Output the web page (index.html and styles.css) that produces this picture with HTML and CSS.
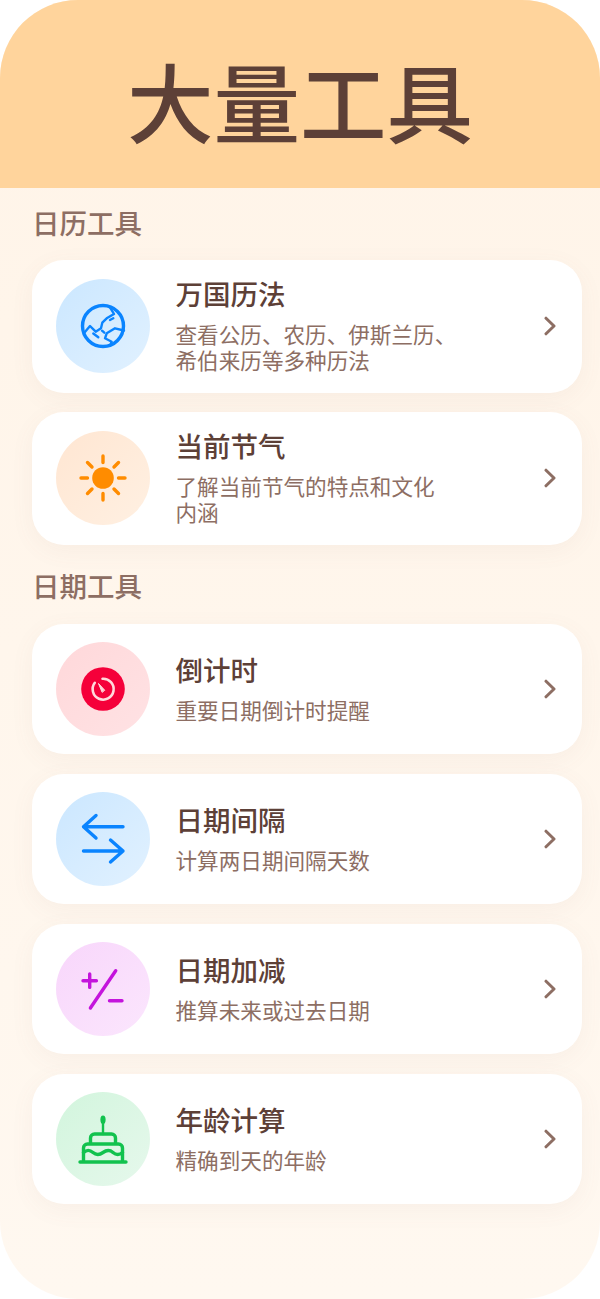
FILE: index.html
```html
<!DOCTYPE html>
<html lang="zh-CN">
<head>
  <meta charset="UTF-8">
  <meta name="viewport" content="width=device-width, initial-scale=1.0">
  <title>大量工具</title>
  <link rel="stylesheet" href="styles.css">
</head>
<body>
  <div class="screen">
    <header class="top-bar">
      <h1>大量工具</h1>
    </header>

    <section class="tool-group">
      <h2>日历工具</h2>
      <div class="tool-list">
        <div class="tool-card">
          <div class="tool-icon icon-blue">
            <svg viewBox="0 0 56 56">
              <circle cx="28" cy="28" r="20.5"/>
              <path class="thin" d="M35 9.3 39 16 31.700 20.300 27.300 24.700 26 30.300 20.700 33.700 15 28 9.300 34.700"/>
              <path class="thin" d="M49 32.500 40 30.300 31.700 35.300 30 40.300 36.700 43.700 35 47.500"/>
              <path class="thin" d="M18.300 35.500 23.300 39.300M27 32.700 29.300 34.700M35 22 38.300 20.300"/>
            </svg>
          </div>
          <div class="tool-text">
            <h3>万国历法</h3>
            <p>查看公历、农历、伊斯兰历、<br>希伯来历等多种历法</p>
          </div>
          <svg class="chevron" viewBox="0 0 14 22"><path d="M2 3.200 10 11 2 18.800"/></svg>
        </div>
        <div class="tool-card">
          <div class="tool-icon icon-orange">
            <svg viewBox="0 0 56 56">
              <circle class="solid" cx="28" cy="28" r="10.8"/>
              <path d="M28 6V12.500M28 43.500V50M6 28H12.500M43.500 28H50M12.500 12.500 17 17M39 39 43.500 43.500M43.500 12.500 39 17M17 39 12.500 43.500"/>
            </svg>
          </div>
          <div class="tool-text">
            <h3>当前节气</h3>
            <p>了解当前节气的特点和文化<br>内涵</p>
          </div>
          <svg class="chevron" viewBox="0 0 14 22"><path d="M2 3.200 10 11 2 18.800"/></svg>
        </div>
      </div>
    </section>

    <section class="tool-group">
      <h2>日期工具</h2>
      <div class="tool-list">
        <div class="tool-card">
          <div class="tool-icon icon-red">
            <svg viewBox="0 0 56 56">
              <circle class="solid" cx="28" cy="28" r="21.800"/>
              <path class="pale" d="M27.500 17.700A10.500 10.500 0 1 1 19.800 21.800"/>
              <path class="needle" d="M29.500 29 23.500 22.500 27 31Z"/>
            </svg>
          </div>
          <div class="tool-text">
            <h3>倒计时</h3>
            <p>重要日期倒计时提醒</p>
          </div>
          <svg class="chevron" viewBox="0 0 14 22"><path d="M2 3.200 10 11 2 18.800"/></svg>
        </div>
        <div class="tool-card">
          <div class="tool-icon icon-blue">
            <svg viewBox="0 0 56 56">
              <path d="M8.500 15.700H48M21 4.500 8.500 15.700 21 27M8.500 40H48M35.500 29 48 40 35.500 51"/>
            </svg>
          </div>
          <div class="tool-text">
            <h3>日期间隔</h3>
            <p>计算两日期间隔天数</p>
          </div>
          <svg class="chevron" viewBox="0 0 14 22"><path d="M2 3.200 10 11 2 18.800"/></svg>
        </div>
        <div class="tool-card">
          <div class="tool-icon icon-purple">
            <svg viewBox="0 0 56 56">
              <path d="M40.700 9.700 15.400 47M14.700 13V26.400M8 19.700H21.400M34.500 39.700H47"/>
            </svg>
          </div>
          <div class="tool-text">
            <h3>日期加减</h3>
            <p>推算未来或过去日期</p>
          </div>
          <svg class="chevron" viewBox="0 0 14 22"><path d="M2 3.200 10 11 2 18.800"/></svg>
        </div>
        <div class="tool-card">
          <div class="tool-icon icon-green">
            <svg viewBox="0 0 56 56">
              <ellipse class="solid" cx="28" cy="8.700" rx="2.600" ry="4.200"/>
              <path class="thin" d="M28 11V23"/>
              <path d="M5 51H51M8.500 51V37A4 4 0 0 1 12.500 33H43.500A4 4 0 0 1 47.500 37V51M15.500 33V27A4 4 0 0 1 19.500 23H36.500A4 4 0 0 1 40.500 27V33"/>
              <path d="M8.500 41.500C12 38.500 14.500 38.500 18 41.500S24.500 44 28 41.500 34.500 38.500 38 41.500 44.500 44 47.500 41.500"/>
            </svg>
          </div>
          <div class="tool-text">
            <h3>年龄计算</h3>
            <p>精确到天的年龄</p>
          </div>
          <svg class="chevron" viewBox="0 0 14 22"><path d="M2 3.200 10 11 2 18.800"/></svg>
        </div>
      </div>
    </section>
  </div>
</body>
</html>
```

FILE: styles.css
```css
* {
  box-sizing: border-box;
}

body {
  margin: 0;
  background-color: #fff;
  font-family: "Liberation Sans", "Noto Sans CJK SC", sans-serif;
}

.screen {
  height: 1299px;
  overflow: hidden;
  border-radius: 78px;
  background: linear-gradient(180deg, #fff4e8 0%, #fff8f0 100%);
}

.top-bar {
  display: flex;
  align-items: center;
  justify-content: center;
  height: 188px;
  padding-top: 26px;
  background-color: #ffd49c;
}

.top-bar h1 {
  margin: 0;
  font-size: 86.5px;
  font-weight: 500;
  line-height: 1;
  color: #5d4037;
}

.tool-group {
  margin-bottom: 7px;
  padding: 0 18px 0 32px;
}

.tool-group h2 {
  margin: 0;
  padding: 18.5px 0 17.5px;
  font-size: 27.5px;
  font-weight: 500;
  line-height: 36px;
  color: #8d6e63;
}

.tool-list {
  display: flex;
  flex-direction: column;
  gap: 19.5px;
}

.tool-card {
  display: flex;
  align-items: center;
  padding: 18.25px 24px;
  border-radius: 32px;
  background-color: #fff;
  box-shadow: 0 6px 24px rgba(141, 110, 99, 0.06);
}

.tool-icon {
  display: flex;
  flex: none;
  align-items: center;
  justify-content: center;
  width: 94px;
  height: 94px;
  border-radius: 50%;
}

.tool-icon svg {
  width: 56px;
  height: 56px;
  fill: none;
  stroke: currentColor;
  stroke-width: 3.4;
  stroke-linecap: round;
  stroke-linejoin: round;
}

.tool-icon .solid {
  fill: currentColor;
  stroke: none;
}

.tool-icon .thin {
  stroke-width: 2.4;
}

.tool-icon .pale {
  stroke: #ffd9dc;
  stroke-width: 2.6;
}

.tool-icon .needle {
  fill: #ffd9dc;
  stroke: #ffd9dc;
  stroke-width: 1;
}

.icon-blue {
  background: linear-gradient(135deg, #cbe7ff, #e1f1ff);
  color: #0a84ff;
}

.icon-orange {
  background: linear-gradient(135deg, #ffe6d2, #fff0e2);
  color: #ff8c00;
}

.icon-red {
  background: linear-gradient(135deg, #ffd8da, #ffe2e4);
  color: #f5003a;
}

.icon-purple {
  background: linear-gradient(135deg, #f8d6fb, #fbe6fd);
  color: #c414dc;
}

.icon-green {
  background: linear-gradient(135deg, #d2f5dd, #e6f8ec);
  color: #12c24e;
}

.tool-text {
  flex: 1;
  margin: 1px 0 -1px 25.5px;
}

.tool-text h3 {
  margin: 0 0 10px;
  font-size: 27.5px;
  font-weight: 500;
  line-height: 34px;
  color: #5d4037;
}

.tool-text p {
  margin: 0;
  font-size: 21.6px;
  line-height: 26px;
  color: #8d6e63;
}

.chevron {
  flex: none;
  width: 14px;
  height: 22px;
  fill: none;
  stroke: #8d6e63;
  stroke-width: 3;
  stroke-linecap: round;
  stroke-linejoin: round;
}
```
